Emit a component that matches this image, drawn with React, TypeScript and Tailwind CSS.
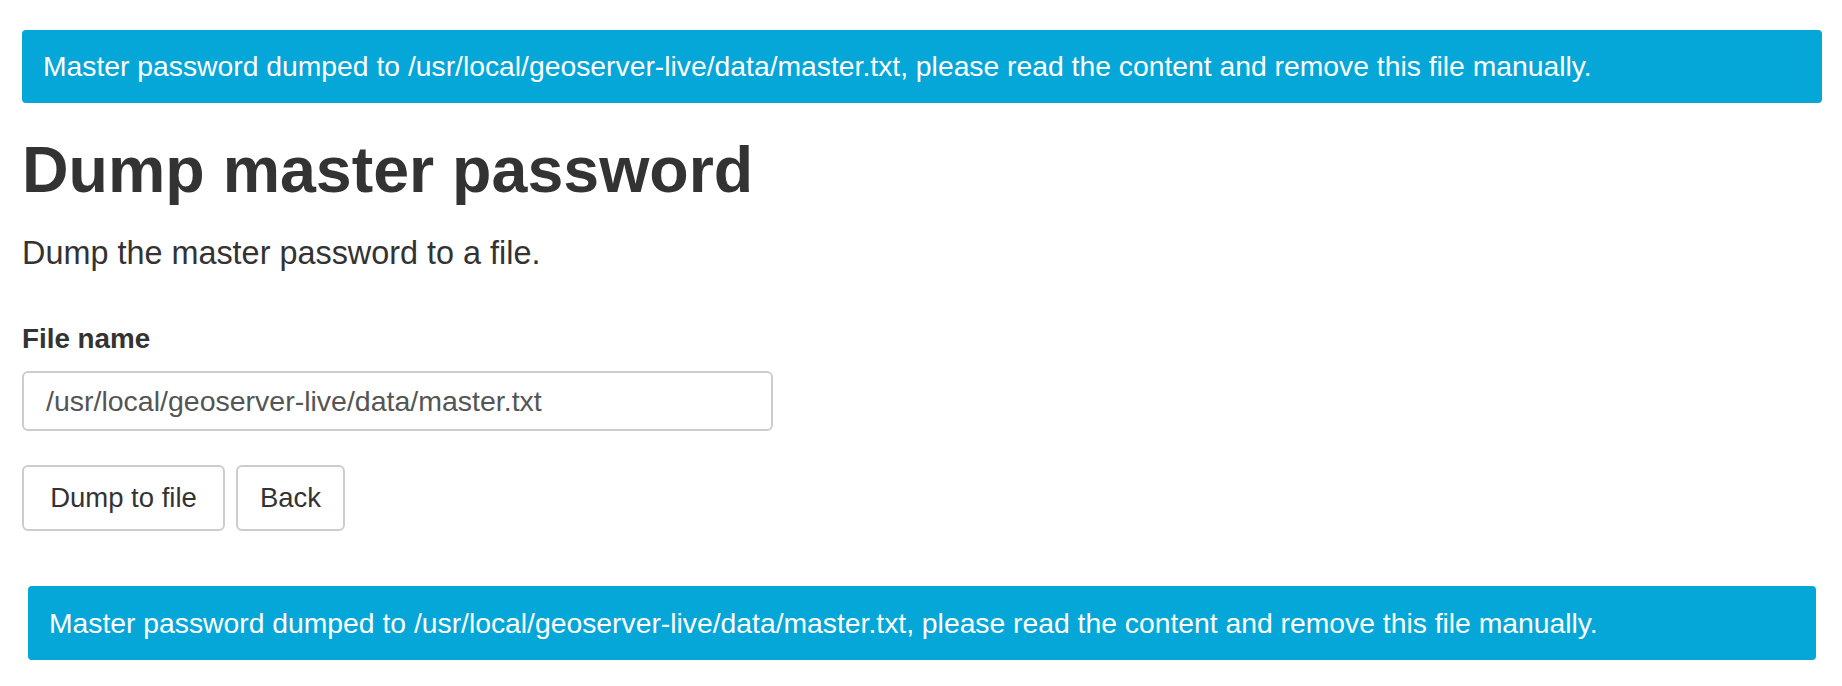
import React from "react";

const MSG =
  "Master password dumped to /usr/local/geoserver-live/data/master.txt, please read the content and remove this file manually.";

export default function App() {
  return (
    <div
      className="min-h-[686px] bg-white pt-[30px] pl-[22px] pr-[20px] text-[#333]"
      style={{ fontFamily: '"Liberation Sans", Arial, Helvetica, sans-serif' }}
    >
      <div className="flex h-[73px] items-center rounded-[4px] bg-[#05a6d8] px-[21px] text-[28.3px] text-white">
        {MSG}
      </div>

      <h1 className="mt-[35px] text-[64.5px] font-bold leading-[64px] text-[#333]">
        Dump master password
      </h1>

      <p className="mt-[31px] text-[32.4px] leading-[40px]">Dump the master password to a file.</p>

      <label className="mt-[51px] block text-[27.8px] font-bold leading-[30px]">File name</label>

      <input
        readOnly
        value="/usr/local/geoserver-live/data/master.txt"
        className="mt-[17px] block h-[60px] w-[751px] rounded-[6px] border-2 border-[#cccccc] px-[22px] text-[28.5px] text-[#555] outline-none"
        style={{ fontFamily: '"Liberation Sans", Arial, Helvetica, sans-serif' }}
      />

      <div className="mt-[34px] flex gap-[11px]">
        <button className="h-[66px] w-[203px] rounded-[6px] border-2 border-[#cccccc] bg-white text-[27.5px] text-[#333]">
          Dump to file
        </button>
        <button className="h-[66px] w-[109px] rounded-[6px] border-2 border-[#cccccc] bg-white text-[27.5px] text-[#333]">
          Back
        </button>
      </div>

      <div className="mx-[6px] mt-[55px] flex h-[74px] items-center rounded-[4px] bg-[#05a6d8] px-[21px] text-[28.3px] text-white">
        {MSG}
      </div>
    </div>
  );
}
